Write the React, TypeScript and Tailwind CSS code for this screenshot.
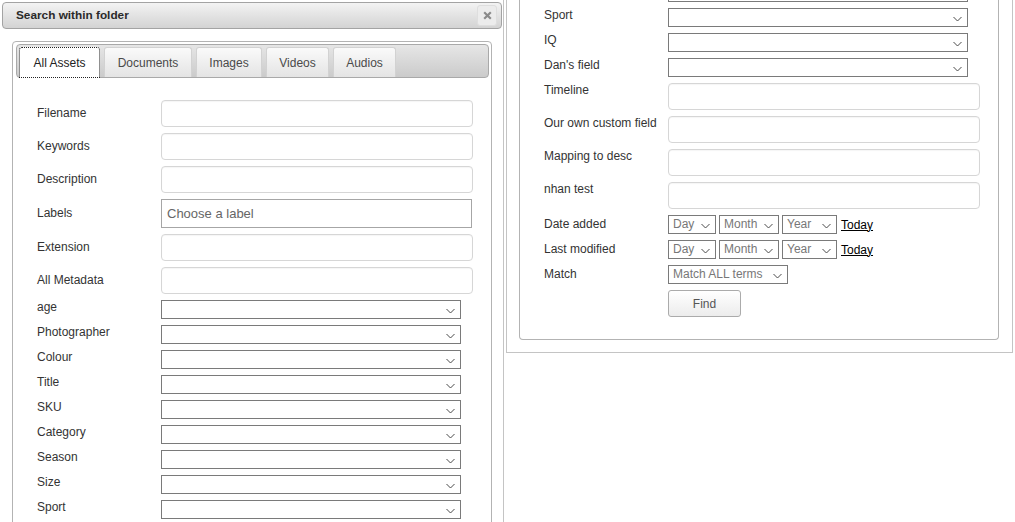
import React from 'react';

const Chevron = () => (
    <svg width="9" height="6" viewBox="0 0 9 6" fill="none" className="shrink-0 mt-[3px]">
        <path d="M0.5 1L4.5 5L8.5 1" stroke="#4a4a4a" strokeWidth="1" />
    </svg>
);

// a closed select drawn as a box with a chevron
const SelectBox = ({ text, className }: { text?: string; className: string }) => (
    <div className={`flex items-center justify-between h-[19px] border border-[#7a7a7a] bg-white pl-[4px] pr-[5px] ${className}`}>
        <span className="text-[12px] leading-[17px] text-[#777]">{text ?? ''}</span>
        <Chevron />
    </div>
);

const TextBox = () => (
    <div className="h-[27px] w-[312px] rounded-[4px] border border-[#d6d6d6] bg-white shadow-[inset_0_1px_1px_rgba(0,0,0,0.04)]" />
);

const tabs = [
    { label: 'All Assets', width: 'w-[81px]', active: true },
    { label: 'Documents', width: 'w-[88px]' },
    { label: 'Images', width: 'w-[66px]' },
    { label: 'Videos', width: 'w-[63px]' },
    { label: 'Audios', width: 'w-[63px]' },
];

const leftText = ['Filename', 'Keywords', 'Description'];
const leftSelects = ['age', 'Photographer', 'Colour', 'Title', 'SKU', 'Category', 'Season', 'Size', 'Sport'];

function LeftDialog() {
    return (
        <div className="w-[504px] h-[522px] shrink-0 border-r border-[#c4c4c4] overflow-hidden">
            {/* title bar */}
            <div className="ml-[2px] mt-[2px] w-[500px] h-[27px] flex items-center justify-between rounded-[4px] border border-[#a3a3a3] bg-gradient-to-b from-[#f3f3f3] to-[#d3d3d3] pl-[13px] pr-[4px]">
                <span className="text-[11.8px] font-bold text-[#2a2a2a]">Search within folder</span>
                <div className="w-[20px] h-[21px] rounded-[3px] bg-[#ececec] border border-[#dedede] flex items-center justify-center">
                    <svg width="9" height="9" viewBox="0 0 9 9">
                        <path d="M1.2 1.2L7.8 7.8M7.8 1.2L1.2 7.8" stroke="#8a8a8a" strokeWidth="2.2" />
                    </svg>
                </div>
            </div>

            <div className="ml-[12px] mt-[12px] w-[480px] h-[600px] rounded-t-[4px] border border-[#b3b3b3] bg-white">
                {/* tab strip */}
                <div className="ml-[3px] mr-[2px] mt-[2px] h-[34px] flex items-end gap-[4px] rounded-[4px] border border-[#a9a9a9] bg-gradient-to-b from-[#e6e6e6] to-[#cbcbcb] pl-[2px]">
                    {tabs.map((t) =>
                        t.active ? (
                            <div key={t.label} className={`${t.width} h-[31px] -mb-px flex items-center justify-center rounded-t-[3px] border border-dotted border-[#222] bg-white text-[12px] text-[#222]`}>
                                {t.label}
                            </div>
                        ) : (
                            <div key={t.label} className={`${t.width} h-[30px] flex items-center justify-center rounded-t-[3px] border border-b-0 border-[#d2d2d2] bg-gradient-to-b from-[#fafafa] to-[#e4e4e4] text-[12px] text-[#4a4a4a]`}>
                                {t.label}
                            </div>
                        )
                    )}
                </div>

                <div className="pl-[24px] pt-[22px] flex flex-col">
                    {leftText.map((l) => (
                        <div key={l} className="flex mb-[6px]">
                            <div className="w-[124px] text-[12px] leading-[26px] text-[#333]">{l}</div>
                            <TextBox />
                        </div>
                    ))}
                    <div className="flex mb-[6px]">
                        <div className="w-[124px] text-[12px] leading-[28px] text-[#333]">Labels</div>
                        <div className="h-[29px] w-[311px] border border-[#a6a6a6] bg-white pl-[5px] text-[13px] leading-[27px] text-[#666]">
                            Choose a label
                        </div>
                    </div>
                    {['Extension', 'All Metadata'].map((l) => (
                        <div key={l} className="flex mb-[6px]">
                            <div className="w-[124px] text-[12px] leading-[26px] text-[#333]">{l}</div>
                            <TextBox />
                        </div>
                    ))}
                    {leftSelects.map((l) => (
                        <div key={l} className="flex mb-[6px]">
                            <div className="w-[124px] text-[12px] leading-[15px] text-[#333]">{l}</div>
                            <SelectBox className="w-[300px]" />
                        </div>
                    ))}
                </div>
            </div>
        </div>
    );
}

function RightDialog() {
    // first row is scrolled out of view, only its select's bottom edge shows
    const selects = ['', 'Sport', 'IQ', "Dan's field"];
    const texts = ['Timeline', 'Our own custom field', 'Mapping to desc', 'nhan test'];
    const DateRow = ({ label }: { label: string }) => (
        <div className="flex mb-[6px]">
            <div className="w-[124px] text-[12px] leading-[18px] text-[#333]">{label}</div>
            <div className="flex items-center gap-[3px]">
                <SelectBox text="Day" className="w-[48px]" />
                <SelectBox text="Month" className="w-[60px]" />
                <SelectBox text="Year" className="w-[55px]" />
                <a href="#" className="ml-[1px] text-[12px] text-black underline">Today</a>
            </div>
        </div>
    );

    return (
        <div className="ml-[2px] w-[507px] h-[353px] shrink-0 border-x border-b border-[#c4c4c4] overflow-hidden">
            <div className="ml-[12px] -mt-[17px] w-[480px] rounded-b-[4px] border border-t-0 border-[#b3b3b3] bg-white pl-[24px] pb-[22px] flex flex-col">
                {selects.map((l, i) => (
                    <div key={i} className="flex mb-[6px]">
                        <div className="w-[124px] text-[12px] leading-[15px] text-[#333]">{l}</div>
                        <SelectBox className="w-[300px]" />
                    </div>
                ))}
                {texts.map((l) => (
                    <div key={l} className="flex mb-[6px]">
                        <div className="w-[124px] text-[12px] leading-[15px] text-[#333]">{l}</div>
                        <TextBox />
                    </div>
                ))}
                <DateRow label="Date added" />
                <DateRow label="Last modified" />
                <div className="flex mb-[6px]">
                    <div className="w-[124px] text-[12px] leading-[18px] text-[#333]">Match</div>
                    <SelectBox text="Match ALL terms" className="w-[120px]" />
                </div>
                <div className="ml-[124px]">
                    <button className="w-[73px] h-[27px] rounded-[3px] border border-[#ababab] bg-gradient-to-b from-[#ffffff] to-[#ececec] text-[12px] text-[#555]">
                        Find
                    </button>
                </div>
            </div>
        </div>
    );
}

export default function App() {
    return (
        <div className="w-[1015px] h-[522px] bg-white flex items-start overflow-hidden font-['Liberation_Sans',Arial,sans-serif]">
            <LeftDialog />
            <RightDialog />
        </div>
    );
}
